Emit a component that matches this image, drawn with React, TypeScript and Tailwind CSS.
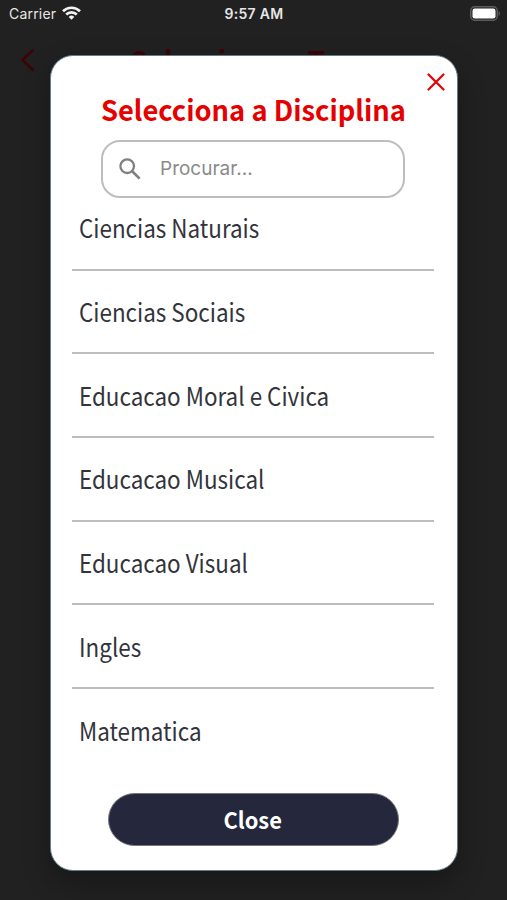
import { useState } from 'react'

const SUBJECTS = [
  'Ciencias Naturais',
  'Ciencias Sociais',
  'Educacao Moral e Civica',
  'Educacao Musical',
  'Educacao Visual',
  'Ingles',
  'Matematica',
]

function StatusBar() {
  return (
    <div className="grid h-7 grid-cols-3 items-center pl-[9px] pr-[8px] font-['Inter',sans-serif] text-[14px] leading-none text-[#e6e6e6]">
      <div className="flex items-center gap-[6px]">
        <span className="tracking-[0.2px]">Carrier</span>
        <svg className="-mt-[2px]" width="19" height="14" viewBox="0 0 19 14" fill="none" stroke="#f2f2f2" strokeWidth="2.7">
          <path d="M1 5.2a12.2 12.2 0 0 1 17 0" />
          <path d="M4.2 8.5a7.6 7.6 0 0 1 10.6 0" />
          <path d="M6.7 10.9a4 4 0 0 1 5.6 0L9.5 13.8z" fill="#f2f2f2" stroke="none" />
        </svg>
      </div>
      <span className="text-center font-semibold tracking-[0.3px]">9:57 AM</span>
      <svg className="-mr-[2px] -mt-[2px] justify-self-end" width="31" height="15" viewBox="0 0 31 15">
        <rect x="0.75" y="0.75" width="26.5" height="13.5" rx="4" fill="none" stroke="#5c5c5c" strokeWidth="1.5" />
        <rect x="2.5" y="2.5" width="23" height="10" rx="2.2" fill="#fff" />
        <path d="M28.6 5v5c1.8-.8 1.8-4.2 0-5z" fill="#5c5c5c" />
      </svg>
    </div>
  )
}

export default function App() {
  const [query, setQuery] = useState('')
  const visible = SUBJECTS.filter((s) => s.toLowerCase().includes(query.toLowerCase()))

  return (
    <div className="relative h-[900px] w-[507px] overflow-hidden bg-[#212121] font-['Noto_Sans_CJK_SC',sans-serif]">
      <StatusBar />

      {/* Dimmed screen header */}
      <header className="grid h-16 grid-cols-[48px_1fr_48px] items-center text-[#3d0307]">
        <svg className="ml-5" width="16" height="24" viewBox="0 0 16 24" fill="none" stroke="currentColor" strokeWidth="2.6">
          <path d="M13.5 1.5 2.5 12l11 10.5" />
        </svg>
        <h1 className="pl-[6px] text-center text-[28px] font-bold leading-none">Selecciona a Tema</h1>
      </header>

      {/* Modal */}
      <div className="absolute left-[50px] top-[55px] flex h-[816px] w-[408px] flex-col items-center rounded-[23px] border border-[#607d8b] bg-white pr-[2px] shadow-[0_12px_28px_rgba(0,0,0,0.3)]">
        <button className="mr-[10px] mt-[17px] self-end" aria-label="Fechar">
          <svg width="18" height="18" viewBox="0 0 18 18" fill="none" stroke="#e60000" strokeWidth="2.2" strokeLinecap="round">
            <path d="M1.5 1.5l15 15M16.5 1.5l-15 15" />
          </svg>
        </button>
        <h2 className="mt-[2px] h-[32px] scale-x-[0.975] whitespace-nowrap text-[28px] font-bold leading-[32px] text-[#e60000]">
          Selecciona a Disciplina
        </h2>

        <label className="mt-[15px] flex h-[58px] w-[304px] shrink-0 items-center rounded-[19px] border-2 border-[#bdbdbd] pl-[16px]">
          <svg width="22" height="22" viewBox="0 0 22 22" fill="none" stroke="#808080" strokeWidth="2.3">
            <circle cx="8.2" cy="8.2" r="6.8" />
            <path d="M13 13l7.6 7.6" strokeWidth="2.7" />
          </svg>
          <input
            value={query}
            onChange={(e) => setQuery(e.target.value)}
            placeholder="Procurar..."
            className="ml-[19px] w-[200px] font-['Inter',sans-serif] text-[19px] text-[#333] outline-none placeholder:text-[#8a8a8a]"
          />
        </label>

        <ul className="h-[574px] w-[362px] overflow-hidden">
          {visible.map((subject) => (
            <li
              key={subject}
              className="flex h-[83.7px] items-center border-b-2 border-[#bdbdbd] pl-[7px] text-[25px] leading-none text-[#33343b] first:-mt-[11px] last:border-0"
            >
              <span className="origin-left scale-x-[0.897]">{subject}</span>
            </li>
          ))}
        </ul>

        <button className="mt-[21px] flex h-[53px] w-[291px] shrink-0 items-center justify-center rounded-full border border-[#77777d] bg-[#25273d] text-[23px] font-bold text-white">
          <span className="scale-x-[0.95]">Close</span>
        </button>
      </div>
    </div>
  )
}
